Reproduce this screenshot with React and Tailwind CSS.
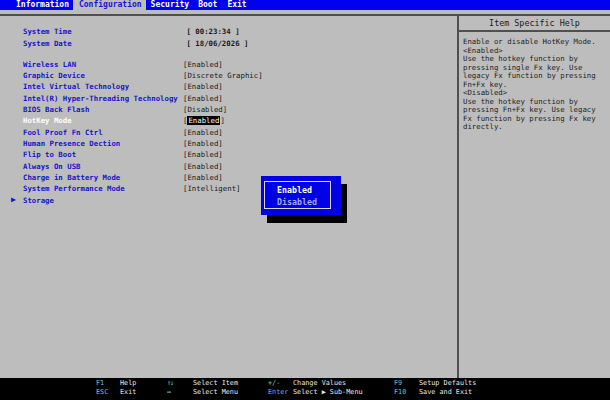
import React from "react";

const rows = [
  ["Wireless LAN", "[Enabled]"],
  ["Graphic Device", "[Discrete Graphic]"],
  ["Intel Virtual Technology", "[Enabled]"],
  ["Intel(R) Hyper-Threading Technology", "[Enabled]"],
  ["BIOS Back Flash", "[Disabled]"],
  ["HotKey Mode", "HOT"],
  ["Fool Proof Fn Ctrl", "[Enabled]"],
  ["Human Presence Dection", "[Enabled]"],
  ["Flip to Boot", "[Enabled]"],
  ["Always On USB", "[Enabled]"],
  ["Charge in Battery Mode", "[Enabled]"],
  ["System Performance Mode", "[Intelligent]"],
];

const help = [
  "Enable or disable HotKey Mode.",
  "<Enabled>",
  "Use the hotkey function by",
  "pressing single Fx key. Use",
  "legacy Fx function by pressing",
  "Fn+Fx key.",
  "<Disabled>",
  "Use the hotkey function by",
  "pressing Fn+Fx key. Use legacy",
  "Fx function by pressing Fx key",
  "directly.",
];

export default function App() {
  return (
    <div className="w-[610px] h-[400px] bg-[#bdbdbd] flex flex-col relative overflow-hidden font-['DejaVu_Sans_Mono',monospace]">
      {/* menu bar */}
      <div className="h-[10px] bg-[#0000f0] flex items-center pl-[16px] text-[8px] leading-[10px] font-bold text-white whitespace-pre">
        <span>Information</span>
        <span className="ml-[4px] pl-[6px] pr-[4px] bg-[#bdbdbd] text-[#1515d0]">Configuration</span>
        <span className="ml-[5px]">Security</span>
        <span className="ml-[9px]">Boot</span>
        <span className="ml-[10px]">Exit</span>
      </div>
      <div className="h-[4px]" />
      <div className="h-[2px] bg-[#505050]" />

      {/* main */}
      <div className="flex-1 flex min-h-0">
        <div className="w-[457px] pl-[23px] pt-[10.3px] text-[7.35px] font-bold">
          <div className="flex h-[11.33px] items-center whitespace-pre">
            <span className="w-[160px] text-[#1515c8]">System Time</span>
            <span className="ml-[3.5px] text-[#1a1a1a]">[ 00:23:34 ]</span>
          </div>
          <div className="flex h-[11.33px] items-center whitespace-pre">
            <span className="w-[160px] text-[#1515c8]">System Date</span>
            <span className="ml-[3.5px] text-[#1a1a1a]">[ 18/06/2026 ]</span>
          </div>
          <div className="h-[9.67px]" />
          {rows.map(([l, v]) => (
            <div key={l} className="flex h-[11.33px] items-center whitespace-pre">
              <span className={"w-[160px] " + (v === "HOT" ? "text-white" : "text-[#1515c8]")}>{l}</span>
              {v === "HOT" ? (
                <span className="text-[#1a1a1a] font-normal">
                  [<span className="bg-black text-white px-[1px]">Enabled</span>]
                </span>
              ) : (
                <span className="text-[#1a1a1a] font-normal">{v}</span>
              )}
            </div>
          ))}
          <div className="flex h-[11.33px] items-center whitespace-pre relative">
            <span className="absolute left-[-12px] text-[#1515c8] text-[8px] leading-[8px]">▶</span>
            <span className="text-[#1515c8]">Storage</span>
          </div>
        </div>

        <div className="flex-1 border-l-[2px] border-[#505050] flex flex-col">
          <div className="h-[16px] flex items-center justify-center border-b-[2px] border-[#505050] text-[8.4px] text-[#1a1a1a] pt-[0.5px]">
            Item Specific Help
          </div>
          <div className="pl-[4px] pt-[6px] text-[7.35px] leading-[8.5px] text-[#1e1e1e] whitespace-pre">
            {help.map((h, i) => (
              <div key={i}>{h}</div>
            ))}
          </div>
        </div>
      </div>

      {/* footer */}
      <div className="h-[22px] bg-black pt-[1px] pl-[96px] text-[6.8px] leading-[9.4px] whitespace-pre">
        <div className="grid grid-cols-[24px_47px_26px_75px_25px_101px_25px_auto]">
          <span className="text-[#5ec4d6]">F1</span>
          <span className="text-[#e6e6e6]">Help</span>
          <span className="text-[#5ec4d6] tracking-[-1px]">↑↓</span>
          <span className="text-[#e6e6e6]">Select Item</span>
          <span className="text-[#5ec4d6]">+/-</span>
          <span className="text-[#e6e6e6]">Change Values</span>
          <span className="text-[#5ec4d6]">F9</span>
          <span className="text-[#e6e6e6]">Setup Defaults</span>
          <span className="text-[#5ec4d6]">ESC</span>
          <span className="text-[#e6e6e6]">Exit</span>
          <span className="text-[#5ec4d6]">↔</span>
          <span className="text-[#e6e6e6]">Select Menu</span>
          <span className="text-[#6fa8f0]">Enter</span>
          <span className="text-[#e6e6e6]">Select ▶ Sub-Menu</span>
          <span className="text-[#5ec4d6]">F10</span>
          <span className="text-[#e6e6e6]">Save and Exit</span>
        </div>
      </div>

      {/* popup */}
      <div className="absolute left-[261px] top-[176px] w-[80px] h-[39px] bg-[#0000e6] shadow-[6px_8px_0_#000]">
        <div className="absolute left-[3px] top-[5px] right-[10px] bottom-[6px] border border-[#d8d8ff]" />
        <div className="absolute left-[16px] top-[8px] text-[8.3px] leading-[12px] font-bold whitespace-pre">
          <div className="text-white">Enabled</div>
          <div className="text-[#a8a8ff]">Disabled</div>
        </div>
      </div>
    </div>
  );
}
